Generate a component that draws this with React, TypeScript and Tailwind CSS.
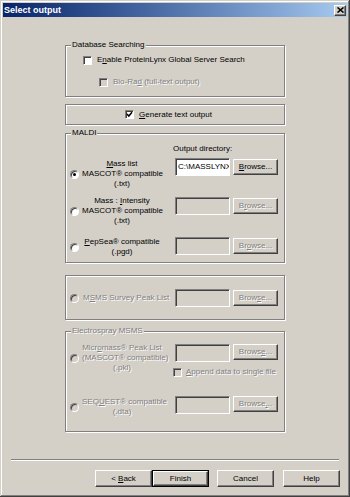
import React from 'react';

const DIM = 'text-[#808080] [text-shadow:1px_1px_0_#ffffff]';
const SUNKEN =
  'border border-t-[#808080] border-l-[#808080] border-b-white border-r-white shadow-[inset_1px_1px_#404040]';
const RAISED =
  'border border-t-white border-l-white border-b-[#404040] border-r-[#404040] shadow-[inset_-1px_-1px_#808080]';
const ETCHED = 'relative border border-[#808080] shadow-[inset_1px_1px_#ffffff,1px_1px_#ffffff]';

function U({ t, i }: { t: string; i: number }) {
  return (
    <>
      {t.slice(0, i)}
      <span className="underline">{t[i]}</span>
      {t.slice(i + 1)}
    </>
  );
}

function Check({ checked, disabled }: { checked?: boolean; disabled?: boolean }) {
  return (
    <div className={`relative w-[9px] h-[9px] shrink-0 ${SUNKEN} ${disabled ? 'bg-[#d4d0c8]' : 'bg-white'}`}>
      {checked && (
        <svg className="absolute inset-0" width="7" height="7" viewBox="0 0 7 7">
          <polyline points="1,3 2.8,5 6,1.2" fill="none" stroke="#000" strokeWidth="1.5" />
        </svg>
      )}
    </div>
  );
}

function Radio({ on, disabled }: { on?: boolean; disabled?: boolean }) {
  return (
    <div
      className={`w-[9px] h-[9px] shrink-0 rounded-full flex items-center justify-center ${SUNKEN} ${
        disabled ? 'bg-[#d4d0c8]' : 'bg-white'
      }`}
    >
      {on && <div className="w-[3px] h-[3px] rounded-full bg-black" />}
    </div>
  );
}

function Field({ value, className = '' }: { value?: string; className?: string }) {
  return (
    <div
      className={`w-[55px] h-[18px] shrink-0 overflow-hidden whitespace-nowrap pl-[2px] leading-[16px] ${SUNKEN} ${
        value ? 'bg-white' : 'bg-[#d4d0c8]'
      } ${className}`}
    >
      {value}
    </div>
  );
}

function Browse({ u, disabled, className = '' }: { u: number; disabled?: boolean; className?: string }) {
  return (
    <div className={`ml-[3px] w-[45px] h-[16px] shrink-0 flex items-center justify-center ${RAISED} ${className}`}>
      <span className={disabled ? DIM : ''}>
        <U t="Browse..." i={u} />
      </span>
    </div>
  );
}

function Legend({ children, dim }: { children: React.ReactNode; dim?: boolean }) {
  return (
    <span
      className={`absolute top-[-6px] left-[5px] px-[1px] bg-[#d4d0c8] leading-[10px] whitespace-nowrap ${dim ? DIM : ''}`}
    >
      {children}
    </span>
  );
}

function Choice({
  lines,
  on,
  disabled,
  className = '',
}: {
  lines: React.ReactNode[];
  on?: boolean;
  disabled?: boolean;
  className?: string;
}) {
  return (
    <div className={`w-[109px] shrink-0 flex items-center pl-[4px] ${className}`}>
      <Radio on={on} disabled={disabled} />
      <div className={`ml-[3px] w-[80px] text-center leading-[10px] whitespace-nowrap ${disabled ? DIM : ''}`}>
        {lines.map((l, k) => (
          <div key={k}>{l}</div>
        ))}
      </div>
    </div>
  );
}

function WinButton({ children, isDefault, className = '' }: { children: React.ReactNode; isDefault?: boolean; className?: string }) {
  if (isDefault) {
    return (
      <div className={`w-[57px] h-[17px] border border-black ${className}`}>
        <div className={`w-full h-full flex items-center justify-center ${RAISED}`}>{children}</div>
      </div>
    );
  }
  return (
    <div className={`w-[57px] h-[17px] flex items-center justify-center ${RAISED} ${className}`}>{children}</div>
  );
}

export default function App() {
  return (
    <div className="w-[350px] h-[497px] p-[3px] flex flex-col bg-[#d4d0c8] text-black text-[8px] font-['Liberation_Sans',Arial,sans-serif] shadow-[inset_-1px_-1px_#404040,inset_1px_1px_#d4d0c8,inset_-2px_-2px_#808080,inset_2px_2px_#ffffff] select-none">
      {/* title bar */}
      <div className="h-[14px] shrink-0 flex items-center justify-between pl-[1px] pr-[1px] bg-gradient-to-r from-[#0a246a] to-[#a6caf0]">
        <span className="text-white font-bold text-[9px] leading-[14px]">Select output</span>
        <div className={`w-[12px] h-[11px] flex items-center justify-center bg-[#d4d0c8] ${RAISED}`}>
          <svg width="7" height="6" viewBox="0 0 7 6">
            <path d="M0.5 0.5 L6.5 5.5 M6.5 0.5 L0.5 5.5" stroke="#000" strokeWidth="1.6" />
          </svg>
        </div>
      </div>

      <div className="flex flex-col pl-[62px]">
        {/* Database Searching */}
        <div className={`${ETCHED} mt-[28px] w-[220px] h-[52px] pt-[9px]`}>
          <Legend>Database Searching</Legend>
          <div className="h-[10px] flex items-center gap-[5px] pl-[17px] leading-[10px]">
            <Check />
            <span>
              <U t="Enable ProteinLynx Global Server Search" i={1} />
            </span>
          </div>
          <div className="mt-[12px] h-[10px] flex items-center gap-[5px] pl-[33px] leading-[10px]">
            <Check disabled />
            <span className={DIM}>
              <U t="Bio-Rad (full-text output)" i={6} />
            </span>
          </div>
        </div>

        {/* Generate text output */}
        <div className={`${ETCHED} mt-[7px] w-[220px] h-[21px] flex items-center gap-[5px] pl-[59px] leading-[10px]`}>
          <Check checked />
          <span>
            <U t="Generate text output" i={0} />
          </span>
        </div>

        {/* MALDI */}
        <div className={`${ETCHED} mt-[8px] w-[220px] h-[130px] pt-[10px]`}>
          <Legend>MALDI</Legend>
          <div className="pl-[107px] leading-[10px]">Output directory:</div>
          <div className="mt-[4px] flex items-start">
            <Choice className="mt-[1px]" on lines={[<U t="Mass list" i={0} />, 'MASCOT® compatible', '(.txt)']} />
            <Field value="C:\MASSLYNX" />
            <Browse u={0} className="mt-[1px]" />
          </div>
          <div className="mt-[7px] flex items-start">
            <Choice lines={[<U t="Mass : Intensity" i={7} />, 'MASCOT® compatible', '(.txt)']} />
            <Field className="mt-[1px]" />
            <Browse u={1} disabled className="mt-[2px]" />
          </div>
          <div className="mt-[11px] flex items-start">
            <Choice lines={[<U t="PepSea® compatible" i={0} />, '(.pgd)']} />
            <Field />
            <Browse u={2} disabled className="mt-[1px]" />
          </div>
        </div>

        {/* MSMS Survey */}
        <div className={`${ETCHED} mt-[12px] w-[220px] h-[45px] pt-[13px]`}>
          <div className="flex items-center h-[18px]">
            <div className="w-[109px] shrink-0 flex items-center pl-[4px]">
              <Radio disabled />
              <span className={`ml-[4px] leading-[10px] whitespace-nowrap ${DIM}`}>
                <U t="MSMS Survey Peak List" i={1} />
              </span>
            </div>
            <Field />
            <Browse u={4} disabled />
          </div>
        </div>

        {/* Electrospray MSMS */}
        <div className={`${ETCHED} mt-[11px] w-[220px] h-[101px] pt-[11px]`}>
          <Legend dim>Electrospray MSMS</Legend>
          <div className="flex items-start">
            <Choice disabled lines={[<U t="Micromass® Peak List" i={4} />, '(MASCOT® compatible)', '(.pkl)']} />
            <div className="flex flex-col">
              <div className="mt-[1px] flex items-start">
                <Field />
                <Browse u={5} disabled />
              </div>
              <div className="mt-[5px] ml-[-2px] h-[10px] flex items-center gap-[4px] leading-[10px] whitespace-nowrap">
                <Check disabled />
                <span className={DIM}>
                  <U t="Append data to single file" i={0} />
                </span>
              </div>
            </div>
          </div>
          <div className="mt-[19px] flex items-start">
            <Choice className="mt-[1px]" disabled lines={[<U t="SEQUEST® compatible" i={3} />, '(.dta)']} />
            <Field />
            <Browse u={6} disabled />
          </div>
        </div>
      </div>

      {/* separator */}
      <div className="mt-[27px] mx-[8px] h-[2px] border-t border-t-[#808080] border-b border-b-white" />

      {/* buttons */}
      <div className="mt-[9px] flex justify-end pr-[7px] leading-[10px]">
        <WinButton>
          <span>
            &lt; <U t="Back" i={0} />
          </span>
        </WinButton>
        <WinButton isDefault>Finish</WinButton>
        <WinButton className="ml-[8px]">Cancel</WinButton>
        <WinButton className="ml-[9px]">Help</WinButton>
      </div>
    </div>
  );
}
